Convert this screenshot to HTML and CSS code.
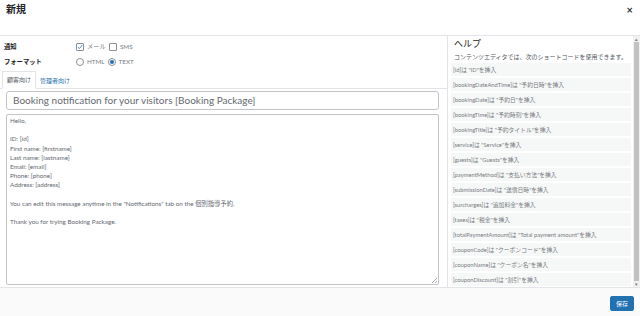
FILE: index.html
```html
<!DOCTYPE html>
<html lang="ja">
<head>
    <meta charset="UTF-8">
    <title>新規</title>
    <link rel="stylesheet" href="styles.css">
</head>
<body>
    <div class="modal">
        <div class="modal-header">
            <h2>新規</h2>
            <span class="close">&times;</span>
        </div>

        <div class="modal-body">
            <div class="editor">
                <div class="field-row">
                    <span class="field-label">通知</span>
                    <label class="option">
                        <span class="check checked">
                            <svg viewBox="0 0 10 10" width="8" height="8"><path d="M1.5 5.2 L4 7.6 L8.8 1.8" fill="none" stroke="#2271b1" stroke-width="1.4"/></svg>
                        </span>メール
                    </label>
                    <label class="option"><span class="check"></span>SMS</label>
                </div>
                <div class="field-row">
                    <span class="field-label">フォーマット</span>
                    <label class="option"><span class="radio"></span>HTML</label>
                    <label class="option"><span class="radio checked"></span>TEXT</label>
                </div>

                <div class="tabs">
                    <span class="tab active">顧客向け</span>
                    <span class="tab">管理者向け</span>
                </div>

                <div class="subject">Booking notification for your visitors [Booking Package]</div>

                <div class="message">
                    <p>Hello,</p>
                    <p class="gap">ID: [id]<br>First name: [firstname]<br>Last name: [lastname]<br>Email: [email]<br>Phone: [phone]<br>Address: [address]</p>
                    <p class="gap">You can edit this message anytime in the "Notifications" tab on the 個別指導予約.</p>
                    <p class="gap">Thank you for trying Booking Package.</p>
                    <span class="grip"></span>
                </div>
            </div>

            <div class="help">
                <div class="help-content">
                    <h3>ヘルプ</h3>
                    <p class="help-intro">コンテンツエディタでは、次のショートコードを使用できます。</p>
                    <ul class="codes">
                        <li>[id]は "ID"を挿入</li>
                        <li>[bookingDateAndTime]は "予約日時"を挿入</li>
                        <li>[bookingDate]は "予約日"を挿入</li>
                        <li>[bookingTime]は "予約時刻"を挿入</li>
                        <li>[bookingTitle]は "予約タイトル"を挿入</li>
                        <li>[service]は "Service"を挿入</li>
                        <li>[guests]は "Guests"を挿入</li>
                        <li>[paymentMethod]は "支払い方法"を挿入</li>
                        <li>[submissionDate]は "送信日時"を挿入</li>
                        <li>[surcharges]は "追加料金"を挿入</li>
                        <li>[taxes]は "税金"を挿入</li>
                        <li>[totalPaymentAmount]は "Total payment amount"を挿入</li>
                        <li>[couponCode]は "クーポンコード"を挿入</li>
                        <li>[couponName]は "クーポン名"を挿入</li>
                        <li>[couponDiscount]は "割引"を挿入</li>
                    </ul>
                </div>
                <div class="scrollbar">
                    <span class="arrow">&#9652;</span>
                    <span class="thumb"></span>
                    <span class="arrow">&#9662;</span>
                </div>
            </div>
        </div>

        <div class="modal-footer">
            <button class="save">保存</button>
        </div>
    </div>
</body>
</html>
```

FILE: styles.css
```css
* {
    margin: 0;
    padding: 0;
    box-sizing: border-box;
}

body {
    font-family: Lato, "Noto Sans CJK JP", sans-serif;
    background: #ffffff;
    color: #50575e;
    width: 640px;
    height: 316px;
    overflow: hidden;
}

.modal {
    display: flex;
    flex-direction: column;
    height: 316px;
}

/* Header */
.modal-header {
    height: 36px;
    flex: none;
    display: flex;
    justify-content: space-between;
    align-items: flex-start;
    padding: 3px 7px 0 6px;
    border-bottom: 1px solid #e2e4e7;
}

.modal-header h2 {
    font-size: 10px;
    font-weight: 700;
    color: #1d2327;
    line-height: 12px;
}

.close {
    font-size: 11px;
    font-weight: 700;
    line-height: 10px;
    margin-top: 2px;
    color: #333;
}

/* Body */
.modal-body {
    flex: 1;
    display: flex;
    min-height: 0;
}

.editor {
    width: 447px;
    flex: none;
    display: flex;
    flex-direction: column;
    padding-top: 3px;
}

.field-row {
    display: flex;
    align-items: center;
    height: 15px;
    font-size: 6.3px;
}

.field-label {
    width: 76px;
    padding-left: 4px;
    font-weight: 700;
    color: #1d2327;
}

.option {
    display: flex;
    align-items: center;
    margin-right: 3px;
    color: #787c82;
}

.check,
.radio {
    width: 8px;
    height: 8px;
    border: 1px solid #8c8f94;
    margin-right: 3px;
    display: flex;
    align-items: center;
    justify-content: center;
    background: #fff;
}

.check {
    border-radius: 1px;
}

.radio {
    border-radius: 50%;
}

.radio.checked::after {
    content: '';
    width: 4px;
    height: 4px;
    border-radius: 50%;
    background: #2271b1;
}

.tabs {
    display: flex;
    align-items: flex-end;
    height: 18px;
    margin-top: 2px;
    padding-left: 2px;
    border-bottom: 1px solid #e2e4e7;
}

.tab {
    font-size: 6px;
    padding: 0 4px;
    line-height: 15px;
    color: #2271b1;
}

.tab.active {
    color: #50575e;
    border: 1px solid #e2e4e7;
    border-bottom: 1px solid #fff;
    margin-bottom: -1px;
    line-height: 16px;
}

.subject {
    margin: 2px 8px 0 6px;
    height: 19px;
    border: 1px solid #c3c4c7;
    border-radius: 3px;
    padding: 0 6px;
    font-size: 10px;
    line-height: 17px;
    color: #646970;
    white-space: nowrap;
    overflow: hidden;
}

.message {
    position: relative;
    margin: 4px 8px 2px 6px;
    flex: 1;
    border: 1px solid #c3c4c7;
    border-radius: 2px;
    padding: 1px 3px;
    font-size: 6.3px;
    line-height: 9.2px;
    color: #646970;
}

.message .gap {
    margin-top: 9.2px;
}

.grip {
    position: absolute;
    right: 1px;
    bottom: 1px;
    width: 5px;
    height: 5px;
    background: linear-gradient(135deg, transparent 45%, #aaa 45%, #aaa 55%, transparent 55%, transparent 70%, #aaa 70%, #aaa 80%, transparent 80%);
}

/* Help */
.help {
    flex: 1;
    display: flex;
    border-left: 1px solid #e2e4e7;
    overflow: hidden;
}

.help-content {
    flex: 1;
    padding: 2px 2px 0 3px;
    overflow: hidden;
}

.help h3 {
    font-size: 9px;
    font-weight: 400;
    color: #1d2327;
    line-height: 12px;
    padding-left: 3px;
}

.help-intro {
    font-size: 6px;
    line-height: 10px;
    color: #50575e;
    padding-left: 3px;
    margin-top: 2px;
    white-space: nowrap;
}

.codes {
    list-style: none;
    margin-top: 1px;
}

.codes li {
    background: #f6f7f7;
    height: 13px;
    line-height: 13px;
    margin-bottom: 2px;
    padding-left: 2px;
    font-size: 5.8px;
    color: #787c82;
    white-space: nowrap;
}

.scrollbar {
    width: 7px;
    flex: none;
    background: #f1f1f1;
    display: flex;
    flex-direction: column;
    align-items: center;
}

.arrow {
    font-size: 5px;
    line-height: 6px;
    height: 6px;
    color: #777;
}

.thumb {
    flex: 1;
    width: 5px;
    background: #c1c1c1;
}

/* Footer */
.modal-footer {
    height: 29px;
    flex: none;
    display: flex;
    justify-content: flex-end;
    align-items: center;
    padding-right: 6px;
    background: #fafafa;
    border-top: 1px solid #e2e4e7;
}

.save {
    width: 24px;
    height: 15px;
    background: #2271b1;
    border: 1px solid #2271b1;
    border-radius: 2px;
    color: #fff;
    font-family: inherit;
    font-size: 6px;
    margin-top: 2px;
}
```
